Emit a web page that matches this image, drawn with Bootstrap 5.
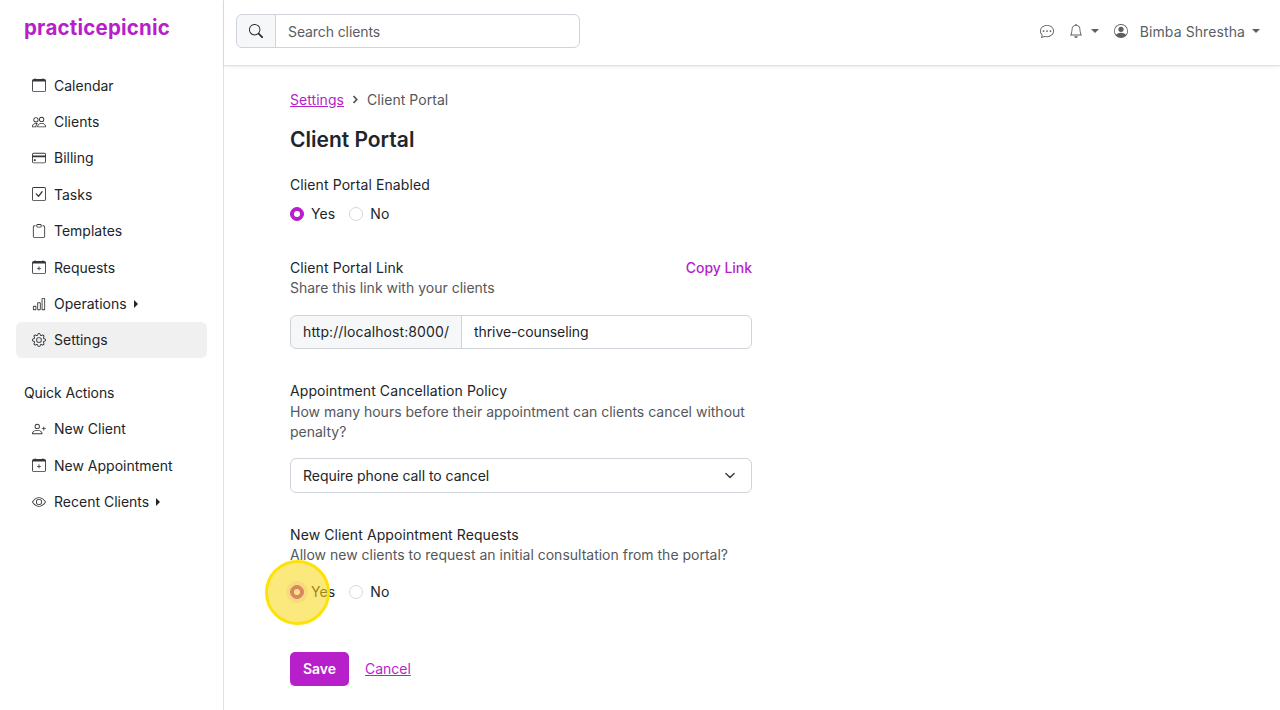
<!DOCTYPE html>
<html lang="en"><head><meta charset="utf-8"><title>Client Portal</title>
<link href="https://cdn.jsdelivr.net/npm/bootstrap@5.3.0/dist/css/bootstrap.min.css" rel="stylesheet">
<style>
:root{--pp:#b61fc9;--ink:#212529;--mute:#54585c;--line:#ced4da}
html,body{height:710px;overflow:hidden}
body{font-family:"Inter","Liberation Sans",sans-serif;font-size:14px;line-height:21px;color:var(--ink);letter-spacing:.1px}
.ico{width:14px;height:14px;fill:currentColor;flex:none}
.side{width:224px;height:710px;border-right:1px solid #dee2e6;padding:0 16px;flex:none}
.brand{color:var(--pp);font-size:20.5px;font-weight:700;line-height:28px;padding:14px 8px 0;margin-bottom:25px;letter-spacing:.2px}
.sitem{display:flex;align-items:center;gap:8px;height:36.4px;padding:0 15px 0 16px;color:var(--ink);text-decoration:none;border-radius:6px;letter-spacing:0}
.sitem .ico{width:14px;height:14px;color:#33373b}
.sitem.on{background:#f0f0f0}
.tri{width:0;height:0;border-left:4px solid #212529;border-top:4px solid transparent;border-bottom:4px solid transparent;margin-left:-1px}
.qtitle{padding-left:8px;margin:24px 0 7.5px;line-height:21px;letter-spacing:-.1px}
.topb{height:66px;border-bottom:1px solid #dee2e6;box-shadow:0 1px 3px rgba(0,0,0,.08);padding:0 20px 3px 12px}
.srch{width:344px;height:34px}
.srch .input-group-text,.urlg .input-group-text{background:#f6f7f9;border-color:var(--line);font-size:14px}
.srch .input-group-text{padding:0 12px;color:var(--ink)}
.srch .form-control,.urlg .form-control,.urlg .input-group-text,.frm .form-select{font-size:14px;line-height:21px;border-color:var(--line);box-shadow:none;color:var(--ink)}
.urlg .input-group-text{letter-spacing:.1px}
.urlg .form-control{letter-spacing:-.1px}
.frm .form-select{letter-spacing:-.04px}
.srch .form-control{padding:5px 12px;letter-spacing:-.1px}
.srch .form-control::placeholder{color:#5a5e62}
.tools{color:#5b5f63}
.gap-a{margin-left:15px}
.gap-b{margin-left:8px}
.gap-c{margin-left:12px}
.gap-d{margin-left:7px}
.car{width:0;height:0;border-top:4px solid #5b5f63;border-left:4px solid transparent;border-right:4px solid transparent}
.pagem{padding:23px 66px 0}
.frm{width:462px}
.crumb{line-height:21px;color:var(--mute);display:flex;align-items:center;gap:8px;margin-bottom:16px;letter-spacing:.05px}
.crumb a,.cancel{color:var(--pp)}
.crumb svg{width:7px;height:9px;fill:none;stroke:#54585c;stroke-width:1.8}
.ptitle{font-size:21px;font-weight:600;line-height:28px;margin:0 0 20px;letter-spacing:0}
.lbl{line-height:21px;margin:0;display:block}
.hlp{color:var(--mute);line-height:20.5px;letter-spacing:0}
.hlp-nudge{padding-top:.5px}
.copy{color:var(--pp);text-decoration:none;font-weight:500;letter-spacing:-.05px}
.rads{display:flex;gap:14px;align-items:center;height:21px}
.rads .form-check{margin:0;padding:0;min-height:21px;display:flex;align-items:center;gap:7px}
.rads .form-check-input{width:14px;height:14px;margin:0;float:none;flex:none;border-color:#d5d8db}
.rads .form-check-input:checked{background-color:var(--pp);border-color:var(--pp)}
.rads .form-check-input:focus{box-shadow:none}
.rads .form-check-input.ringed{box-shadow:0 0 0 4px rgba(182,31,201,.13)}
.urlg{height:34px;margin-top:16px}
.urlg .input-group-text{padding:0 12px}
.urlg .form-control{padding:5px 12px}
.frm .form-select{height:35px;padding:6px 36px 6px 12px;margin-top:15px;background-position:right 14px center;background-size:14px 11px}
.btn-save{background:var(--pp);color:#fff;font-weight:600;font-size:14px;height:34px;width:59px;padding:0;border:0;border-radius:5px;line-height:34px}
.btn-save:hover{background:var(--pp);color:#fff}
.cancel{margin-bottom:1px;letter-spacing:0}
.spot{position:absolute;left:265px;top:560px;width:65px;height:65px;border-radius:50%;background:rgba(250,215,20,.55);border:3px solid #fde20a;pointer-events:none}
.sec1{margin-top:33px}.sec2{margin-top:31.5px}.sec3{margin-top:31px}
.rads2{margin-top:16px}.acts{margin-top:50px}
</style></head>
<body>
<svg width="0" height="0" class="position-absolute" aria-hidden="true"><defs>
<symbol id="i-cal" viewBox="0 0 16 16"><path d="M3.5 0a.5.5 0 0 1 .5.5V1h8V.5a.5.5 0 0 1 1 0V1h1a2 2 0 0 1 2 2v11a2 2 0 0 1-2 2H2a2 2 0 0 1-2-2V3a2 2 0 0 1 2-2h1V.5a.5.5 0 0 1 .5-.5zM1 4v10a1 1 0 0 0 1 1h12a1 1 0 0 0 1-1V4H1z"/></symbol>
<symbol id="i-calp" viewBox="0 0 16 16"><path d="M8 7a.5.5 0 0 1 .5.5V9H10a.5.5 0 0 1 0 1H8.5v1.5a.5.5 0 0 1-1 0V10H6a.5.5 0 0 1 0-1h1.5V7.5A.5.5 0 0 1 8 7z"/><path d="M3.5 0a.5.5 0 0 1 .5.5V1h8V.5a.5.5 0 0 1 1 0V1h1a2 2 0 0 1 2 2v11a2 2 0 0 1-2 2H2a2 2 0 0 1-2-2V3a2 2 0 0 1 2-2h1V.5a.5.5 0 0 1 .5-.5zM1 4v10a1 1 0 0 0 1 1h12a1 1 0 0 0 1-1V4H1z"/></symbol>
<symbol id="i-ppl" viewBox="0 0 16 16"><path d="M15 14s1 0 1-1-1-4-5-4-5 3-5 4 1 1 1 1h8Zm-7.978-1A.261.261 0 0 1 7 12.996c.001-.264.167-1.03.76-1.72C8.312 10.629 9.282 10 11 10c1.717 0 2.687.63 3.24 1.276.593.69.758 1.457.76 1.72l-.008.002a.274.274 0 0 1-.014.002H7.022ZM11 7a2 2 0 1 0 0-4 2 2 0 0 0 0 4Zm3-2a3 3 0 1 1-6 0 3 3 0 0 1 6 0ZM6.936 9.28a5.88 5.88 0 0 0-1.23-.247A7.35 7.35 0 0 0 5 9c-4 0-5 3-5 4 0 .667.333 1 1 1h4.216A2.238 2.238 0 0 1 5 13c0-1.01.377-2.042 1.09-2.904.243-.294.526-.569.846-.816ZM4.92 10A5.493 5.493 0 0 0 4 13H1c0-.26.164-1.03.76-1.724.545-.636 1.492-1.256 3.16-1.275ZM1.5 5.5a3 3 0 1 1 6 0 3 3 0 0 1-6 0Zm3-2a2 2 0 1 0 0 4 2 2 0 0 0 0-4Z"/></symbol>
<symbol id="i-card" viewBox="0 0 16 16"><path d="M0 4a2 2 0 0 1 2-2h12a2 2 0 0 1 2 2v8a2 2 0 0 1-2 2H2a2 2 0 0 1-2-2V4zm2-1a1 1 0 0 0-1 1v1h14V4a1 1 0 0 0-1-1H2zm13 4H1v5a1 1 0 0 0 1 1h12a1 1 0 0 0 1-1V7z"/><path d="M2 10a.7.7 0 0 1 .7-.7h1a.7.7 0 0 1 .7.7v.6a.7.7 0 0 1-.7.7h-1a.7.7 0 0 1-.7-.7v-.6z"/></symbol>
<symbol id="i-chk" viewBox="0 0 16 16"><path d="M14 1a1 1 0 0 1 1 1v12a1 1 0 0 1-1 1H2a1 1 0 0 1-1-1V2a1 1 0 0 1 1-1h12zM2 0a2 2 0 0 0-2 2v12a2 2 0 0 0 2 2h12a2 2 0 0 0 2-2V2a2 2 0 0 0-2-2H2z"/><path d="M10.97 4.97a.75.75 0 0 1 1.071 1.05l-3.992 4.99a.75.75 0 0 1-1.08.02L4.324 8.384a.75.75 0 1 1 1.06-1.06l2.094 2.093 3.473-4.425a.235.235 0 0 1 .02-.022z"/></symbol>
<symbol id="i-clip" viewBox="0 0 16 16"><path d="M4 1.5H3a2 2 0 0 0-2 2V14a2 2 0 0 0 2 2h10a2 2 0 0 0 2-2V3.5a2 2 0 0 0-2-2h-1v1h1a1 1 0 0 1 1 1V14a1 1 0 0 1-1 1H3a1 1 0 0 1-1-1V3.5a1 1 0 0 1 1-1h1v-1z"/><path d="M9.5 1a.5.5 0 0 1 .5.5v1a.5.5 0 0 1-.5.5h-3a.5.5 0 0 1-.5-.5v-1a.5.5 0 0 1 .5-.5h3zm-3-1A1.5 1.5 0 0 0 5 1.5v1A1.5 1.5 0 0 0 6.5 4h3A1.5 1.5 0 0 0 11 2.5v-1A1.5 1.5 0 0 0 9.5 0h-3z"/></symbol>
<symbol id="i-bar" viewBox="0 0 16 16"><path d="M4 11H2v3h2v-3zm5-4H7v7h2V7zm5-5v12h-2V2h2zm-2-1a1 1 0 0 0-1 1v12a1 1 0 0 0 1 1h2a1 1 0 0 0 1-1V2a1 1 0 0 0-1-1h-2zM6 7a1 1 0 0 1 1-1h2a1 1 0 0 1 1 1v7a1 1 0 0 1-1 1H7a1 1 0 0 1-1-1V7zm-5 4a1 1 0 0 1 1-1h2a1 1 0 0 1 1 1v3a1 1 0 0 1-1 1H2a1 1 0 0 1-1-1v-3z"/></symbol>
<symbol id="i-gear" viewBox="0 0 16 16"><path d="M8 4.754a3.246 3.246 0 1 0 0 6.492 3.246 3.246 0 0 0 0-6.492zM5.754 8a2.246 2.246 0 1 1 4.492 0 2.246 2.246 0 0 1-4.492 0z"/><path d="M9.796 1.343c-.527-1.79-3.065-1.79-3.592 0l-.094.319a.873.873 0 0 1-1.255.52l-.292-.16c-1.64-.892-3.433.902-2.54 2.541l.159.292a.873.873 0 0 1-.52 1.255l-.319.094c-1.79.527-1.79 3.065 0 3.592l.319.094a.873.873 0 0 1 .52 1.255l-.16.292c-.892 1.64.901 3.434 2.541 2.54l.292-.159a.873.873 0 0 1 1.255.52l.094.319c.527 1.79 3.065 1.79 3.592 0l.094-.319a.873.873 0 0 1 1.255-.52l.292.16c1.64.893 3.434-.902 2.54-2.541l-.159-.292a.873.873 0 0 1 .52-1.255l.319-.094c1.79-.527 1.79-3.065 0-3.592l-.319-.094a.873.873 0 0 1-.52-1.255l.16-.292c.893-1.64-.902-3.433-2.541-2.54l-.292.159a.873.873 0 0 1-1.255-.52l-.094-.319zm-2.633.283c.246-.835 1.428-.835 1.674 0l.094.319a1.873 1.873 0 0 0 2.693 1.115l.291-.16c.764-.415 1.6.42 1.184 1.185l-.159.292a1.873 1.873 0 0 0 1.116 2.692l.318.094c.835.246.835 1.428 0 1.674l-.319.094a1.873 1.873 0 0 0-1.115 2.693l.16.291c.415.764-.42 1.6-1.185 1.184l-.291-.159a1.873 1.873 0 0 0-2.693 1.116l-.094.318c-.246.835-1.428.835-1.674 0l-.094-.319a1.873 1.873 0 0 0-2.692-1.115l-.292.16c-.764.415-1.6-.42-1.184-1.185l.159-.291A1.873 1.873 0 0 0 1.945 8.93l-.319-.094c-.835-.246-.835-1.428 0-1.674l.319-.094A1.873 1.873 0 0 0 3.06 4.377l-.16-.292c-.415-.764.42-1.6 1.185-1.184l.292.159a1.873 1.873 0 0 0 2.692-1.115l.094-.319z"/></symbol>
<symbol id="i-padd" viewBox="0 0 16 16"><path d="M6 8a3 3 0 1 0 0-6 3 3 0 0 0 0 6zm2-3a2 2 0 1 1-4 0 2 2 0 0 1 4 0zm4 8c0 1-1 1-1 1H1s-1 0-1-1 1-4 6-4 6 3 6 4zm-1-.004c-.001-.246-.154-.986-.832-1.664C9.516 10.68 8.289 10 6 10c-2.29 0-3.516.68-4.168 1.332-.678.678-.83 1.418-.832 1.664h10z"/><path d="M13.5 5a.5.5 0 0 1 .5.5V7h1.5a.5.5 0 0 1 0 1H14v1.5a.5.5 0 0 1-1 0V8h-1.5a.5.5 0 0 1 0-1H13V5.5a.5.5 0 0 1 .5-.5z"/></symbol>
<symbol id="i-eye" viewBox="0 0 16 16"><path d="M16 8s-3-5.5-8-5.5S0 8 0 8s3 5.5 8 5.5S16 8 16 8zM1.173 8a13.133 13.133 0 0 1 1.66-2.043C4.12 4.668 5.88 3.5 8 3.5c2.12 0 3.879 1.168 5.168 2.457A13.133 13.133 0 0 1 14.828 8c-.058.087-.122.183-.195.288-.335.48-.83 1.12-1.465 1.755C11.879 11.332 10.119 12.5 8 12.5c-2.12 0-3.879-1.168-5.168-2.457A13.134 13.134 0 0 1 1.172 8z"/><path d="M8 5.5a2.5 2.5 0 1 0 0 5 2.5 2.5 0 0 0 0-5zM4.5 8a3.5 3.5 0 1 1 7 0 3.5 3.5 0 0 1-7 0z"/></symbol>
<symbol id="i-srch" viewBox="0 0 16 16"><path d="M11.742 10.344a6.5 6.5 0 1 0-1.397 1.398h-.001c.03.04.062.078.098.115l3.85 3.85a1 1 0 0 0 1.415-1.414l-3.85-3.85a1.007 1.007 0 0 0-.115-.1zM12 6.5a5.5 5.5 0 1 1-11 0 5.5 5.5 0 0 1 11 0z"/></symbol>
<symbol id="i-chat" viewBox="0 0 16 16"><path d="M5 8a1 1 0 1 1-2 0 1 1 0 0 1 2 0zm4 0a1 1 0 1 1-2 0 1 1 0 0 1 2 0zm3 1a1 1 0 1 0 0-2 1 1 0 0 0 0 2z"/><path d="m2.165 15.803.02-.004c1.83-.363 2.948-.842 3.468-1.105A9.06 9.06 0 0 0 8 15c4.418 0 8-3.134 8-7s-3.582-7-8-7-8 3.134-8 7c0 1.76.743 3.37 1.97 4.6a10.437 10.437 0 0 1-.524 2.318l-.003.011a10.722 10.722 0 0 1-.244.637c-.079.186.074.394.273.362a21.673 21.673 0 0 0 .693-.125zm.8-3.108a1 1 0 0 0-.287-.801C1.618 10.83 1 9.468 1 8c0-3.192 3.004-6 7-6s7 2.808 7 6c0 3.193-3.004 6-7 6a8.06 8.06 0 0 1-2.088-.272 1 1 0 0 0-.711.074c-.387.196-1.24.57-2.634.893a10.97 10.97 0 0 0 .398-2z"/></symbol>
<symbol id="i-bell" viewBox="0 0 16 16"><path d="M8 16a2 2 0 0 0 2-2H6a2 2 0 0 0 2 2zM8 1.918l-.797.161A4.002 4.002 0 0 0 4 6c0 .628-.134 2.197-.459 3.742-.16.767-.376 1.566-.663 2.258h10.244c-.287-.692-.502-1.49-.663-2.258C12.134 8.197 12 6.628 12 6a4.002 4.002 0 0 0-3.203-3.92L8 1.917zM14.22 12c.223.447.481.801.78 1H1c.299-.199.557-.553.78-1C2.68 10.2 3 6.88 3 6c0-2.42 1.72-4.44 4.005-4.901a1 1 0 1 1 1.99 0A5.002 5.002 0 0 1 13 6c0 .88.32 4.2 1.22 6z"/></symbol>
<symbol id="i-user" viewBox="0 0 16 16"><path d="M11 6a3 3 0 1 1-6 0 3 3 0 0 1 6 0z"/><path fill-rule="evenodd" d="M0 8a8 8 0 1 1 16 0A8 8 0 0 1 0 8zm8-7a7 7 0 0 0-5.468 11.37C3.242 11.226 4.805 10 8 10s4.757 1.225 5.468 2.37A7 7 0 0 0 8 1z"/></symbol>
</defs></svg>

<div class="d-flex">
<aside class="side">
  <div class="brand">practicepicnic</div>
  <nav>
    <a class="sitem" href="#"><svg class="ico"><use href="#i-cal"/></svg>Calendar</a>
    <a class="sitem" href="#"><svg class="ico"><use href="#i-ppl"/></svg>Clients</a>
    <a class="sitem" href="#"><svg class="ico"><use href="#i-card"/></svg>Billing</a>
    <a class="sitem" href="#"><svg class="ico"><use href="#i-chk"/></svg>Tasks</a>
    <a class="sitem" href="#"><svg class="ico"><use href="#i-clip"/></svg>Templates</a>
    <a class="sitem" href="#"><svg class="ico"><use href="#i-calp"/></svg>Requests</a>
    <a class="sitem" href="#"><svg class="ico"><use href="#i-bar"/></svg>Operations<span class="tri"></span></a>
    <a class="sitem on" href="#"><svg class="ico"><use href="#i-gear"/></svg>Settings</a>
  </nav>
  <div class="qtitle">Quick Actions</div>
  <nav>
    <a class="sitem" href="#"><svg class="ico"><use href="#i-padd"/></svg>New Client</a>
    <a class="sitem" href="#"><svg class="ico"><use href="#i-calp"/></svg>New Appointment</a>
    <a class="sitem" href="#"><svg class="ico"><use href="#i-eye"/></svg>Recent Clients<span class="tri"></span></a>
  </nav>
</aside>
<div class="flex-grow-1">
  <header class="topb d-flex align-items-center justify-content-between">
    <div class="input-group srch">
      <span class="input-group-text"><svg class="ico"><use href="#i-srch"/></svg></span>
      <input class="form-control" type="text" placeholder="Search clients">
    </div>
    <div class="tools d-flex align-items-center">
      <svg class="ico"><use href="#i-chat"/></svg>
      <svg class="ico gap-a"><use href="#i-bell"/></svg>
      <span class="car gap-b"></span>
      <svg class="ico gap-a"><use href="#i-user"/></svg>
      <span class="gap-c">Bimba Shrestha</span>
      <span class="car gap-d"></span>
    </div>
  </header>
  <main class="pagem">
    <div class="frm">
      <div class="crumb"><a href="#">Settings</a><svg viewBox="0 0 7 9"><path d="M1.5 1l3.2 3.5L1.5 8"/></svg><span>Client Portal</span></div>
      <h1 class="ptitle">Client Portal</h1>

      <label class="lbl">Client Portal Enabled</label>
      <div class="rads mt-2">
        <div class="form-check"><input class="form-check-input" type="radio" name="r1" id="r1a" checked><label class="form-check-label" for="r1a">Yes</label></div>
        <div class="form-check"><input class="form-check-input" type="radio" name="r1" id="r1b"><label class="form-check-label" for="r1b">No</label></div>
      </div>

      <div class="d-flex justify-content-between sec1"><label class="lbl">Client Portal Link</label><a class="copy" href="#">Copy Link</a></div>
      <div class="hlp">Share this link with your clients</div>
      <div class="input-group urlg">
        <span class="input-group-text">http://localhost:8000/</span>
        <input class="form-control" type="text" value="thrive-counseling">
      </div>

      <label class="lbl sec2">Appointment Cancellation Policy</label>
      <div class="hlp hlp-nudge">How many hours before their appointment can clients cancel without penalty?</div>
      <select class="form-select"><option>Require phone call to cancel</option></select>

      <label class="lbl sec3">New Client Appointment Requests</label>
      <div class="hlp">Allow new clients to request an initial consultation from the portal?</div>
      <div class="rads rads2">
        <div class="form-check"><input class="form-check-input ringed" type="radio" name="r2" id="r2a" checked><label class="form-check-label" for="r2a">Yes</label></div>
        <div class="form-check"><input class="form-check-input" type="radio" name="r2" id="r2b"><label class="form-check-label" for="r2b">No</label></div>
      </div>

      <div class="d-flex align-items-center gap-3 acts">
        <button class="btn btn-save" type="button">Save</button>
        <a class="cancel" href="#">Cancel</a>
      </div>
    </div>
  </main>
</div>
</div>
<div class="spot"></div>
</body></html>
